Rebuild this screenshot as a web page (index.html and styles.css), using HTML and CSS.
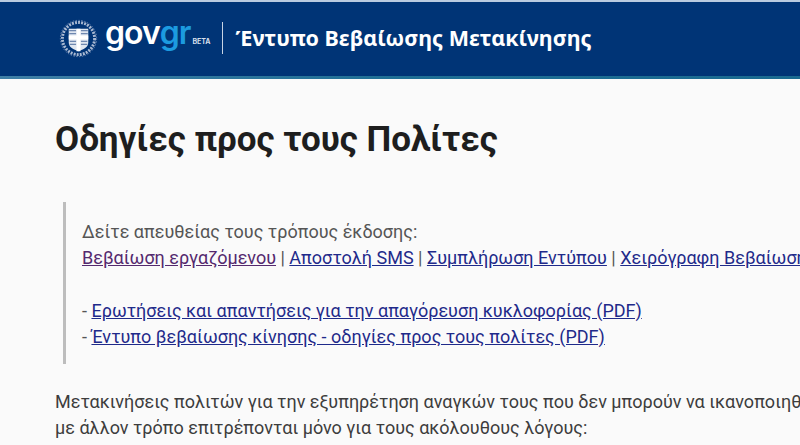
FILE: index.html
```html
<!DOCTYPE html>
<html lang="el">
<head>
<meta charset="utf-8">
<title>Έντυπο Βεβαίωσης Μετακίνησης</title>
<link rel="stylesheet" href="styles.css">
</head>
<body>
<header class="header">
  <div class="brand">
    <svg class="emblem" viewBox="0 0 40 40" aria-hidden="true">
      <circle cx="20" cy="20" r="16.5" fill="none" stroke="#a9b9d2" stroke-width="3" stroke-dasharray="2 1.2"/>
      <circle cx="20" cy="20" r="18.6" fill="none" stroke="#6f89b3" stroke-width="1" stroke-dasharray="1.5 1.5"/>
      <path d="M10 10h20v14c0 5-5 7-10 9-5-2-10-4-10-9z" fill="#dfe6f0"/>
      <path d="M18 10h4v7h8v4h-8v12h-4V21h-8v-4h8z" fill="#fff"/>
      <path d="M10.500 12h7M10.500 15h7M22.500 12h7M22.500 15h7M11 23h6.500M11 26h6.500M22.500 23h6.500M22.500 26h6.500" stroke="#6f88b0" stroke-width="1.200"/>
    </svg>
    <div class="logo"><span class="gov">gov</span><span class="gr">gr</span><span class="beta">BETA</span></div>
    <div class="divider"></div>
    <div class="title">Έντυπο Βεβαίωσης Μετακίνησης</div>
  </div>
</header>
<main class="main">
  <h1 class="heading">Οδηγίες προς τους Πολίτες</h1>
  <blockquote class="quote">
    <div>Δείτε απευθείας τους τρόπους έκδοσης:</div>
    <div><a class="visited" href="#a">Βεβαίωση εργαζόμενου</a> | <a href="#b">Αποστολή SMS</a> | <a href="#c">Συμπλήρωση Εντύπου</a> | <a href="#d">Χειρόγραφη Βεβαίωση</a></div>
    <div class="spacer"></div>
    <div>- <a href="#e">Ερωτήσεις και απαντήσεις για την απαγόρευση κυκλοφορίας (PDF)</a></div>
    <div>- <a href="#f">Έντυπο βεβαίωσης κίνησης - οδηγίες προς τους πολίτες (PDF)</a></div>
  </blockquote>
  <p class="para">Μετακινήσεις πολιτών για την εξυπηρέτηση αναγκών τους που δεν μπορούν να ικανοποιηθούν<br>με άλλον τρόπο επιτρέπονται μόνο για τους ακόλουθους λόγους:</p>
</main>
</body>
</html>
```
FILE: styles.css
```css
* { box-sizing: border-box; }
html, body { margin: 0; height: 445px; overflow: hidden; }
body { background: #fafafa; font-family: Roboto, "Noto Sans", sans-serif; color: #2b2b2b; }
.header {
  height: 79px;
  padding: 2px 0 3px 59px;
  background:
    linear-gradient(#b9cbe0, #b9cbe0) top / 100% 2px no-repeat,
    linear-gradient(90deg, #3f7fa6, #1f6f95 50%, #1a6a90) bottom / 100% 3px no-repeat,
    #003476;
}
.brand { display: flex; align-items: center; height: 74px; }
.emblem { width: 39px; height: 39px; flex: none; position: relative; top: -1px; }
.logo { display: flex; align-items: baseline; margin-left: 7px; font-family: Inter, sans-serif; font-weight: 600; font-size: 32px; line-height: 40px; position: relative; top: -2px; letter-spacing: -1px; }
.gov { color: #fff; }
.gr { color: #1c9be0; }
.beta { color: #d5dfeb; font-size: 7px; font-weight: 700; margin-left: 2px; letter-spacing: 0; }
.divider { width: 1px; height: 32px; background: #c8d4e4; margin-left: 11px; position: relative; top: -1px; }
.title { margin-left: 13px; color: #fff; font-family: "Noto Sans", sans-serif; font-weight: 700; font-size: 21.5px; white-space: nowrap; position: relative; top: -2px; }
.main { padding: 0 0 0 55px; }
.heading { margin: 40px 0 0; font-size: 35px; line-height: 42px; font-weight: 700; color: #1e1e1e; white-space: nowrap; }
.quote { margin: 41px 0 0 8px; padding: 17px 0 14px 16px; border-left: 3px solid #bdbdbd; height: 162px; font-size: 18px; line-height: 26px; color: #555; white-space: nowrap; width: 800px; }
.spacer { height: 27px; }
.quote a { color: #1f2a8a; }
.quote a.visited { color: #54296e; }
.para { margin: 25px 0 0; font-size: 18px; line-height: 26px; color: #3d3d3d; white-space: nowrap; }
```
